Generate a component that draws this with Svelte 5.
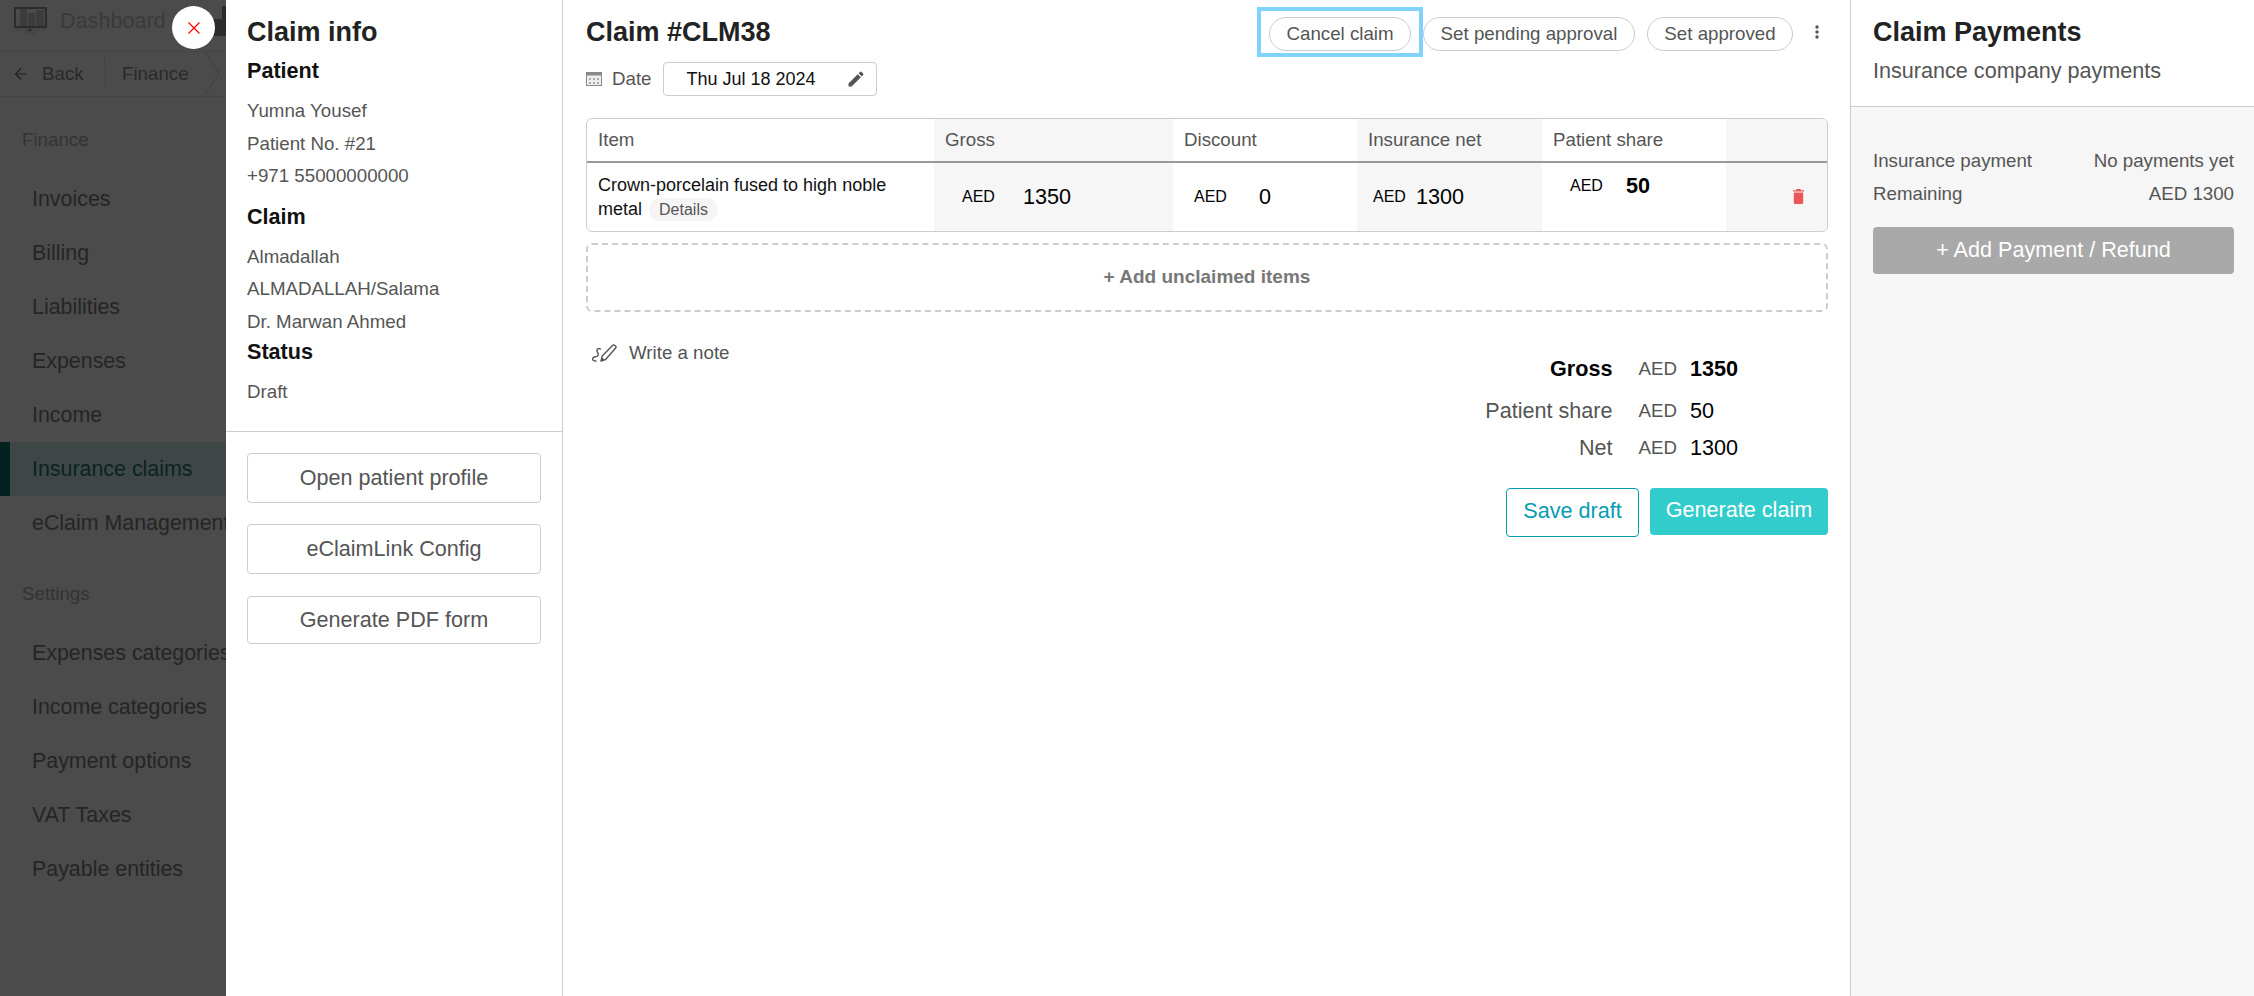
<script>
  const financeLinks = ["Invoices", "Billing", "Liabilities", "Expenses", "Income", "Insurance claims", "eClaim Management"];
  const settingsLinks = ["Expenses categories", "Income categories", "Payment options", "VAT Taxes", "Payable entities"];
</script>

<div class="page">
  <aside class="nav">
    <div class="nav-brand">
      <svg class="brand-icon" viewBox="0 0 33 32" aria-hidden="true">
        <path d="M6 2h7v20H6zM14 8h7v14h-7zM22 5h8v17h-8z" fill="#3c3c3c" />
        <rect x="1" y="3" width="31" height="19" fill="none" stroke="#2c2c2c" stroke-width="2" />
        <path d="M1 23h31v3H1zM11 26h11l1 4H10z" fill="#464646" />
        <circle cx="16" cy="25" r="1.500" fill="#2c2c2c" />
      </svg>
      <span class="brand-text">Dashboard</span>
      <svg class="brand-extra" viewBox="0 0 21 30" aria-hidden="true">
        <path d="M8 13h9v17H8zM17 0h4v30h-4z" fill="#2c2c2c" />
      </svg>
    </div>
    <div class="nav-crumbs">
      <span class="crumb-back">
        <svg width="14" height="14" viewBox="0 0 14 14" aria-hidden="true"><path d="M13 7H1.500M7 1.500 1.500 7 7 12.500" fill="none" stroke="#222" stroke-width="1.200" /></svg>
        Back
      </span>
      <span class="crumb-current">Finance</span>
      <svg class="crumb-chevron" width="16" height="44" viewBox="0 0 16 44" aria-hidden="true"><path d="M1 0l14 21L1 43" fill="none" stroke="#404040" /></svg>
    </div>
    <h4>Finance</h4>
    {#each financeLinks as link}
      <div class="nav-link" class:active={link === "Insurance claims"}>{link}</div>
    {/each}
    <h4 class="second">Settings</h4>
    {#each settingsLinks as link}
      <div class="nav-link">{link}</div>
    {/each}
  </aside>

  <div class="close-btn">
    <svg width="12" height="12" viewBox="0 0 12 12" aria-hidden="true"><path d="M0.500 0.500l11 11M11.500 0.500l-11 11" stroke="#f00" stroke-width="1.200" /></svg>
  </div>

  <section class="info">
    <div class="info-body">
      <h2>Claim info</h2>
      <h3>Patient</h3>
      <p>Yumna Yousef</p>
      <p>Patient No. #21</p>
      <p>+971 55000000000</p>
      <h3 class="claim-head">Claim</h3>
      <p>Almadallah</p>
      <p>ALMADALLAH/Salama</p>
      <p>Dr. Marwan Ahmed</p>
      <h3 class="status-head">Status</h3>
      <p>Draft</p>
    </div>
    <div class="info-actions">
      <button>Open patient profile</button>
      <button>eClaimLink Config</button>
      <button class="last">Generate PDF form</button>
    </div>
  </section>

  <main class="claim">
    <header class="claim-head-row">
      <div>
        <h1>Claim #CLM38</h1>
        <div class="date-row">
          <svg width="16" height="14" viewBox="0 0 16 14" aria-hidden="true">
            <rect x="0.500" y="0.500" width="15" height="13" fill="#eee" stroke="#888" />
            <rect x="0.500" y="0.500" width="15" height="3" fill="#888" />
            <path d="M3 6h2v2H3zM7 6h2v2H7zM11 6h2v2h-2zM3 10h2v2H3zM7 10h2v2H7zM11 10h2v2h-2z" fill="#aaa" />
          </svg>
          <span class="date-label">Date</span>
          <div class="date-input">
            <span>Thu Jul 18 2024</span>
            <svg width="20" height="20" viewBox="0 0 24 24" aria-hidden="true"><path fill="#555" d="M3 17.250V21h3.750L17.810 9.940l-3.750-3.750L3 17.250zM20.710 7.040a1 1 0 0 0 0-1.410l-2.340-2.340a1 1 0 0 0-1.410 0l-1.830 1.830 3.750 3.750 1.830-1.830z" /></svg>
          </div>
        </div>
      </div>
      <div class="claim-actions">
        <div class="focus-ring"><button class="pill cancel">Cancel claim</button></div>
        <button class="pill pending">Set pending approval</button>
        <button class="pill approved">Set approved</button>
        <svg class="more" width="4" height="14" viewBox="0 0 4 14" aria-hidden="true"><circle cx="2" cy="2" r="1.700" fill="#555" /><circle cx="2" cy="7" r="1.700" fill="#555" /><circle cx="2" cy="12" r="1.700" fill="#555" /></svg>
      </div>
    </header>

    <div class="table">
      <div class="cell th">Item</div>
      <div class="cell th shade">Gross</div>
      <div class="cell th">Discount</div>
      <div class="cell th shade">Insurance net</div>
      <div class="cell th">Patient share</div>
      <div class="cell th shade"></div>

      <div class="cell td item-name">
        Crown-porcelain fused to high noble metal <span class="details">Details</span>
      </div>
      <div class="cell td shade money gross-money"><small>AED</small><b>1350</b></div>
      <div class="cell td money disc-money"><small>AED</small><b>0</b></div>
      <div class="cell td shade money ins-money"><small>AED</small><b>1300</b></div>
      <div class="cell td money pat-money"><small>AED</small><b>50</b></div>
      <div class="cell td shade del">
        <svg width="11" height="15" viewBox="0 0 11 15" aria-hidden="true"><path fill="#eb5757" d="M3.500 0h4l.5 1.200h3v1.400H0V1.200h3zM0.800 3.500h9.400v10A1.500 1.500 0 0 1 8.700 15H2.300a1.500 1.500 0 0 1-1.500-1.500z" /></svg>
      </div>
    </div>

    <div class="add-items">+ Add unclaimed items</div>

    <div class="summary-row">
      <div class="note">
        <svg width="25" height="18" viewBox="0 0 25 18" aria-hidden="true">
          <path d="M9 17l1.200-5L20.500 1.500c.8-.8 1.600-.8 2.400 0l.6.600c.7.700.7 1.500 0 2.200L13.500 15.500z" fill="none" stroke="#555" stroke-width="1.400" stroke-linejoin="round" />
          <path d="M8.500 5C6.500 3.800 4.500 5 5 7s2 2.500 1 4.500-4 .5-5 2.500.5 3 3 3" fill="none" stroke="#555" stroke-width="1.400" stroke-linecap="round" />
          <path d="M9 17l1.200-3.500 2 2z" fill="#555" />
        </svg>
        <span>Write a note</span>
      </div>
      <div class="totals">
        <div class="total-row strong"><span class="t-label">Gross</span><small>AED</small><span class="t-val">1350</span></div>
        <div class="total-row"><span class="t-label">Patient share</span><small>AED</small><span class="t-val">50</span></div>
        <div class="total-row net"><span class="t-label">Net</span><small>AED</small><span class="t-val">1300</span></div>
      </div>
    </div>

    <div class="claim-submit">
      <button class="save">Save draft</button>
      <button class="generate">Generate claim</button>
    </div>
  </main>

  <aside class="payments">
    <div class="payments-head">
      <h2>Claim Payments</h2>
      <p>Insurance company payments</p>
    </div>
    <div class="payments-body">
      <div class="pay-row"><span>Insurance payment</span><span>No payments yet</span></div>
      <div class="pay-row"><span>Remaining</span><span>AED 1300</span></div>
      <button class="add-pay">+ Add Payment / Refund</button>
    </div>
  </aside>
</div>

<style>
  :global(body) {
    margin: 0;
    font-family: "Liberation Sans", Arial, sans-serif;
  }

  .page {
    position: relative;
    display: flex;
    width: 2254px;
    height: 996px;
    overflow: hidden;
    background: #fff;
    color: #555;
  }

  button {
    padding: 0;
    font-family: inherit;
    cursor: pointer;
  }

  .nav {
    flex: 0 0 226px;
    width: 226px;
    overflow: hidden;
    background: #4b4b4b;
    color: #252525;
    white-space: nowrap;
  }

  .nav-brand {
    display: flex;
    align-items: center;
    box-sizing: border-box;
    height: 52px;
    padding: 0 0 10px 14px;
    border-bottom: 1px solid #454545;
    color: #3a3a3a;
    font-size: 21.6px;
  }

  .brand-icon {
    width: 33px;
    height: 32px;
    margin-right: 13px;
  }

  .brand-extra {
    width: 21px;
    height: 30px;
    margin-left: auto;
  }

  .nav-crumbs {
    display: flex;
    align-items: center;
    box-sizing: border-box;
    height: 45px;
    padding-bottom: 1px;
    border-bottom: 1px solid #454545;
    font-size: 18.72px;
    color: #2a2a2a;
  }

  .crumb-back {
    display: flex;
    align-items: center;
    gap: 14px;
    box-sizing: border-box;
    width: 105px;
    height: 33px;
    padding-left: 14px;
    border-right: 1px solid #444;
  }

  .crumb-current {
    padding-left: 17px;
  }

  .crumb-chevron {
    margin-left: auto;
    margin-right: 6px;
  }

  h4 {
    margin: 0;
    padding: 32px 0 22px 22px;
    color: #333;
    font-size: 18.72px;
    font-weight: 400;
    line-height: 21px;
  }

  h4.second {
    padding-top: 33px;
    padding-bottom: 22px;
  }

  .nav-link {
    box-sizing: border-box;
    height: 54px;
    padding-left: 32px;
    font-size: 21.4px;
    line-height: 54px;
  }

  .nav-link.active {
    padding-left: 22px;
    border-left: 10px solid #03211f;
    background: #3f4746;
    color: #0a2422;
  }

  .close-btn {
    position: absolute;
    left: 172px;
    top: 6px;
    display: flex;
    align-items: center;
    justify-content: center;
    width: 43px;
    height: 43px;
    border-radius: 50%;
    background: #fff;
  }

  .info {
    flex: 0 0 337px;
    box-sizing: border-box;
    border-right: 1px solid #ccc;
  }

  .info-body {
    box-sizing: border-box;
    height: 432px;
    padding: 17px 21px 0;
    border-bottom: 1px solid #ccc;
  }

  .info h2 {
    margin: 0 0 11px;
    color: #222;
    font-size: 27px;
    line-height: 30px;
    font-weight: 700;
  }

  h3 {
    margin: 0;
    color: #111;
    font-size: 21.6px;
    line-height: 25px;
    font-weight: 700;
  }

  .info h3 {
    margin-bottom: 12px;
  }

  .info h3.claim-head {
    margin-top: 11px;
  }

  .info h3.status-head {
    margin-top: 1px;
  }

  .info p {
    margin: 0;
    color: #555;
    font-size: 18.72px;
    line-height: 32.500px;
    white-space: nowrap;
  }

  .info-actions {
    display: flex;
    flex-direction: column;
    gap: 21px;
    padding: 21px 21px;
  }

  .info-actions button {
    height: 50px;
    border: 1px solid #ccc;
    border-radius: 4px;
    background: #fff;
    color: #555;
    font-size: 21.6px;
  }

  .info-actions .last {
    height: 48px;
    margin-top: 1px;
  }

  .claim {
    flex: 0 0 1288px;
    box-sizing: border-box;
    padding: 0 22px 0 23px;
    border-right: 1px solid #ccc;
  }

  .claim-head-row {
    display: flex;
    justify-content: space-between;
    height: 118px;
  }

  h1 {
    margin: 17px 0 0;
    color: #222;
    font-size: 27px;
    line-height: 30px;
    font-weight: 700;
  }

  .date-row {
    display: flex;
    align-items: center;
    margin-top: 15px;
  }

  .date-label {
    margin: 0 11px 0 10px;
    font-size: 18.72px;
  }

  .date-input {
    display: flex;
    align-items: center;
    justify-content: space-between;
    box-sizing: border-box;
    width: 214px;
    height: 34px;
    padding: 0 10px 0 23px;
    border: 1px solid #ccc;
    border-radius: 4px;
    color: #111;
    font-size: 18px;
  }

  .claim-actions {
    display: flex;
    align-items: flex-start;
    padding-top: 7px;
  }

  .focus-ring {
    display: flex;
    padding: 6px 8px 2px 8px;
    border: 4px solid #7fd3fb;
  }

  .pill {
    box-sizing: border-box;
    height: 34px;
    border: 1px solid #ccc;
    border-radius: 17px;
    background: #fff;
    color: #555;
    font-size: 18.72px;
    white-space: nowrap;
  }

  .cancel {
    width: 142px;
  }

  .pending {
    width: 212px;
    margin-top: 10px;
  }

  .approved {
    width: 146px;
    margin: 10px 0 0 12px;
  }

  .more {
    margin: 18px 9px 0 22px;
  }

  .table {
    display: grid;
    grid-template-columns: 347px 239px 184px 185px 184px 1fr;
    grid-template-rows: 44px 68px;
    box-sizing: border-box;
    height: 114px;
    overflow: hidden;
    border: 1px solid #ccc;
    border-radius: 6px;
  }

  .cell {
    box-sizing: border-box;
  }

  .shade {
    background: #f6f6f6;
  }

  .th {
    padding: 9px 11px;
    border-bottom: 2px solid #999;
    font-size: 18.72px;
    line-height: 24px;
  }

  .item-name {
    padding: 10px 11px;
    color: #111;
    font-size: 18px;
    line-height: 24px;
  }

  .details {
    margin-left: 2px;
    padding: 3px 10px;
    border-radius: 14px;
    background: #f5f5f5;
    color: #555;
    font-size: 16px;
  }

  .money {
    display: flex;
    align-items: center;
    color: #000;
  }

  .money small {
    font-size: 16px;
  }

  .money b {
    font-size: 21.6px;
    font-weight: 400;
  }

  .gross-money {
    padding-left: 28px;
    gap: 28px;
  }

  .disc-money {
    padding-left: 21px;
    gap: 32px;
  }

  .ins-money {
    padding-left: 16px;
    gap: 10px;
  }

  .pat-money {
    align-items: flex-start;
    padding: 11px 0 0 28px;
    gap: 23px;
  }

  .pat-money b {
    font-weight: 700;
    line-height: 24px;
  }

  .pat-money small {
    line-height: 24px;
  }

  .del {
    display: flex;
    align-items: center;
    justify-content: flex-end;
    padding: 0 23px 2px 0;
  }

  .add-items {
    display: flex;
    align-items: center;
    justify-content: center;
    box-sizing: border-box;
    height: 69px;
    margin-top: 11px;
    padding-bottom: 2px;
    border: 2px dashed #ccc;
    border-radius: 6px;
    color: #777;
    font-size: 19px;
    font-weight: 700;
  }

  .summary-row {
    display: flex;
    justify-content: space-between;
    margin-top: 28px;
  }

  .note {
    display: flex;
    align-items: center;
    gap: 12px;
    height: 26px;
    padding-left: 6px;
    font-size: 18.72px;
  }

  .totals {
    margin-right: 90px;
    padding-top: 14px;
  }

  .total-row {
    display: flex;
    align-items: center;
    height: 30px;
  }

  .total-row.strong {
    margin-bottom: 12px;
  }

  .total-row.net {
    margin-top: 7px;
  }

  .t-label {
    width: 161px;
    text-align: right;
    font-size: 21.6px;
  }

  .total-row small {
    margin-left: 26px;
    font-size: 18.72px;
  }

  .t-val {
    min-width: 48px;
    margin-left: 13px;
    color: #000;
    font-size: 21.6px;
  }

  .strong .t-label,
  .strong .t-val {
    color: #000;
    font-weight: 700;
  }

  .claim-submit {
    display: flex;
    justify-content: flex-end;
    align-items: flex-start;
    gap: 11px;
    margin-top: 25px;
  }

  .save,
  .generate {
    padding-bottom: 3px;
    border-radius: 4px;
    font-size: 21.6px;
  }

  .save {
    width: 133px;
    height: 49px;
    border: 1px solid #069cb2;
    background: #fff;
    color: #069cb2;
  }

  .generate {
    width: 178px;
    height: 47px;
    border: 0;
    background: #33cccc;
    color: #fff;
  }

  .payments {
    flex: 1 1 auto;
    display: flex;
    flex-direction: column;
  }

  .payments-head {
    box-sizing: border-box;
    height: 107px;
    padding: 17px 22px 0;
    border-bottom: 1px solid #ccc;
  }

  .payments h2 {
    margin: 0;
    color: #222;
    font-size: 27px;
    line-height: 30px;
  }

  .payments-head p {
    margin: 12px 0 0;
    font-size: 21.6px;
    line-height: 24px;
  }

  .payments-body {
    flex: 1;
    padding: 38px 20px 0 22px;
    background: #f6f6f6;
  }

  .pay-row {
    display: flex;
    justify-content: space-between;
    font-size: 18.72px;
    line-height: 32.500px;
  }

  .add-pay {
    width: 100%;
    height: 47px;
    margin-top: 17px;
    padding-bottom: 2px;
    border: 0;
    border-radius: 4px;
    background: #a9a9a9;
    color: #fff;
    font-size: 21.6px;
  }
</style>
